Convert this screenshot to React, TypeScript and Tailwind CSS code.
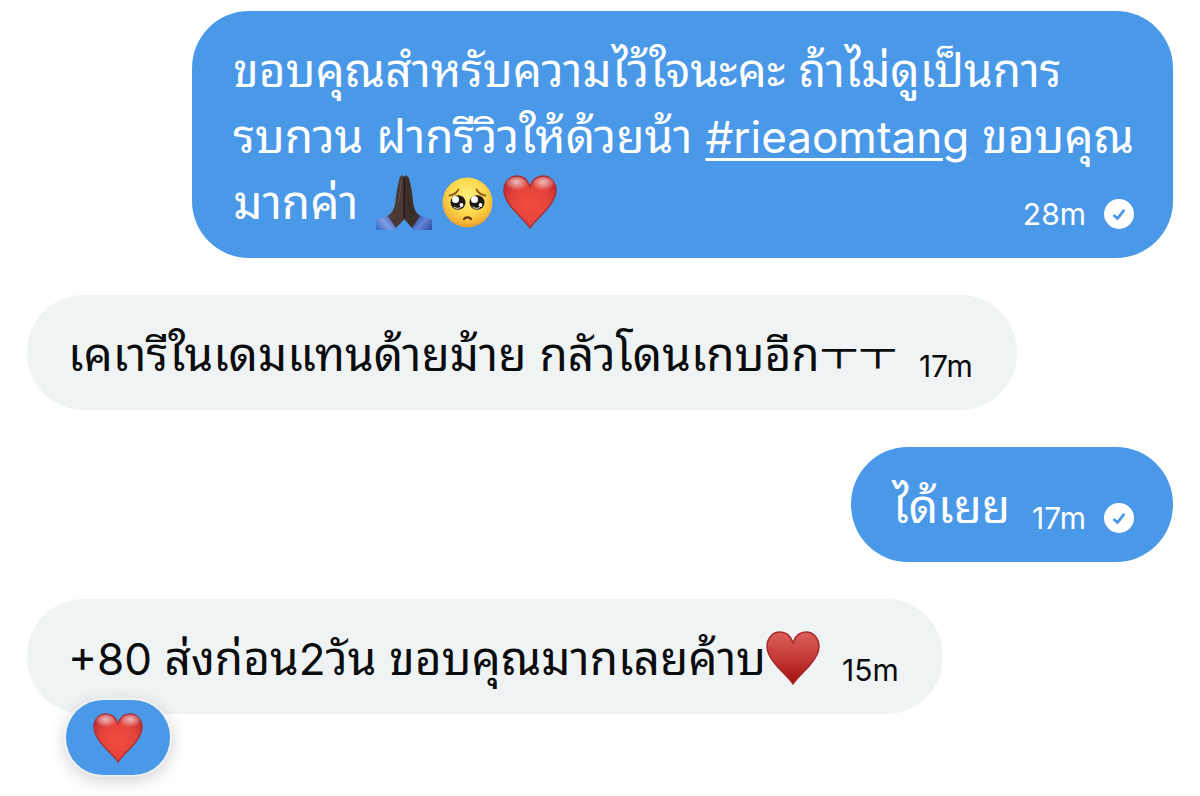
import type { ReactNode } from "react";

type Tone = "red" | "suit";

interface Message {
  id: number;
  sent: boolean;
  lines: ReactNode[];
  time: string;
  reaction?: boolean;
}

function Heart({ id, tone = "red", className }: { id: string; tone?: Tone; className: string }) {
  const suit = tone === "suit";
  return (
    <svg className={className} viewBox="0 0 54 54" fill="none" role="img" aria-label="heart">
      <defs>
        <radialGradient id={`${id}-fill`} cx="0.5" cy="0.55" r="0.6">
          <stop offset="0" stopColor="#ef4d40" />
          <stop offset="0.6" stopColor="#e6443b" />
          <stop offset="1" stopColor="#c22c2f" />
        </radialGradient>
        <linearGradient id={`${id}-suit`} x1="0" y1="0" x2="0" y2="1">
          <stop offset="0" stopColor="#dc5f5b" />
          <stop offset="0.5" stopColor="#c53a38" />
          <stop offset="1" stopColor="#a30f0c" />
        </linearGradient>
        <radialGradient id={`${id}-shine`} cx="0.5" cy="0.35" r="0.6">
          <stop offset="0" stopColor="#fff" stopOpacity="0.65" />
          <stop offset="0.5" stopColor="#fff" stopOpacity="0.35" />
          <stop offset="1" stopColor="#fff" stopOpacity="0" />
        </radialGradient>
      </defs>
      <path
        d="M27 53C24.5 48.5 16.500 41.500 10 34C4.300 27.300 1 22 1 15.500C1 7.200 6.600 1 14 1C20.200 1 24.600 4.700 27 11.500C29.400 4.700 33.800 1 40 1C47.400 1 53 7.200 53 15.500C53 22 49.700 27.300 44 34C37.500 41.500 29.500 48.500 27 53Z"
        fill={suit ? `url(#${id}-suit)` : `url(#${id}-fill)`}
        stroke={suit ? "#a52a2c" : "#a93237"}
        strokeWidth="1.500"
      />
      {!suit && (
        <>
          <ellipse cx="13.500" cy="9" rx="10.500" ry="7" fill={`url(#${id}-shine)`} />
          <ellipse cx="40.500" cy="9" rx="10.500" ry="7" fill={`url(#${id}-shine)`} />
        </>
      )}
    </svg>
  );
}

function PleadingFace() {
  return (
    <svg className="size-[51px]" viewBox="0 0 51 51" role="img" aria-label="pleading face">
      <defs>
        <radialGradient id="face" cx="0.5" cy="0.38" r="0.64">
          <stop offset="0" stopColor="#fff07c" />
          <stop offset="0.55" stopColor="#fcd84c" />
          <stop offset="0.85" stopColor="#f3b236" />
          <stop offset="1" stopColor="#dc9330" />
        </radialGradient>
      </defs>
      <circle cx="25.5" cy="25.5" r="25" fill="url(#face)" />
      <path d="M7.500 18.500C11.500 18 14.500 16 16.500 12.500M43.500 18.500C39.500 18 36.500 16 34.500 12.500" fill="none" stroke="#8a571b" strokeWidth="1.800" strokeLinecap="round" />
      <ellipse cx="16" cy="25.500" rx="7.500" ry="7.300" fill="#201815" />
      <ellipse cx="35" cy="25.500" rx="7.500" ry="7.300" fill="#201815" />
      <circle cx="13.500" cy="22.500" r="3.500" fill="#fff" />
      <circle cx="32.500" cy="22.500" r="3.500" fill="#fff" />
      <circle cx="19.500" cy="28" r="1.900" fill="#fff" />
      <circle cx="38.500" cy="28" r="1.900" fill="#fff" />
      <path d="M12 30C14 31.500 17 31.500 18.500 30.500M31 30C33 31.500 36 31.500 37.500 30.500" fill="none" stroke="#b9b4b0" strokeWidth="1.200" strokeLinecap="round" />
      <path d="M22 42C23.500 39.700 27.500 39.700 29 42" fill="none" stroke="#53310f" strokeWidth="2.200" strokeLinecap="round" />
    </svg>
  );
}

function FoldedHands() {
  return (
    <svg className="h-[55px] w-[56px]" viewBox="0 0 56 55" role="img" aria-label="folded hands">
      <defs>
        <linearGradient id="sleeve-l" x1="0" y1="0.8" x2="1" y2="0.2">
          <stop offset="0" stopColor="#3f6fcb" />
          <stop offset="0.45" stopColor="#7f9fe6" />
          <stop offset="1" stopColor="#2c479c" />
        </linearGradient>
        <linearGradient id="sleeve-r" x1="1" y1="0.8" x2="0" y2="0.2">
          <stop offset="0" stopColor="#3457ac" />
          <stop offset="0.45" stopColor="#6384d6" />
          <stop offset="1" stopColor="#2c479c" />
        </linearGradient>
      </defs>
      <path d="M0 44C5 43 9 42 13 40L21 52L18 55H0Z" fill="url(#sleeve-l)" />
      <path d="M56 44C51 43 47 42 43 40L35 52L38 55H56Z" fill="url(#sleeve-r)" />
      <path d="M25 1C27 0 28.500 1 28.500 3V44L20 53L12 41C17 37 19 32 19.500 26C20 18 22.500 9 23.500 3Z" fill="#4b3933" />
      <path d="M31 1C29.500 0 28 1 28 3V44L36 53L44 41C39 37 37.500 32 37 26C36.500 18 34.500 9 33 3Z" fill="#3f2f2b" />
      <path d="M28.200 3V43" fill="none" stroke="#201615" strokeWidth="1.300" />
      <path d="M32 22C33 31 34 36 38 41" fill="none" stroke="#2c201d" strokeWidth="1" />
      <path d="M25.500 4C25 12 23.500 20 22.500 28" fill="none" stroke="#66504a" strokeWidth="1" />
    </svg>
  );
}

function SentCheck() {
  return (
    <svg className="size-[30px]" viewBox="0 0 30 30" fill="none" role="img" aria-label="Sent">
      <circle cx="15" cy="15" r="15" fill="white" />
      <path d="M9.500 16L13.500 19.500L20.300 10.800" stroke="#4a99e9" strokeWidth="2.800" />
    </svg>
  );
}

// Latin letters and digits run larger than the Thai ones at the same size
function Latin({ children }: { children: ReactNode }) {
  return <span className="text-[44px] leading-none">{children}</span>;
}

const MESSAGES: Message[] = [
  {
    id: 1,
    sent: true,
    time: "28m",
    lines: [
      "ขอบคุณสำหรับความไว้ใจนะคะ ถ้าไม่ดูเป็นการ",
      <>
        รบกวน ฝากรีวิวให้ด้วยน้า{" "}
        <a href="#rieaomtang" className="underline decoration-3 underline-offset-5">
          <Latin>#rieaomtang</Latin>
        </a>{" "}
        ขอบคุณ
      </>,
      <span className="flex items-center gap-[18px]">
        มากค่า
        <span className="flex items-center gap-2.5">
          <FoldedHands />
          <PleadingFace />
          <Heart id="heart-thanks" className="size-[54px]" />
        </span>
      </span>,
    ],
  },
  {
    id: 2,
    sent: false,
    time: "17m",
    lines: [
      <>
        เคเารีในเดมแทนด้ายม้าย กลัวโดนเกบอีก<span className="text-[42px] leading-none">ㅜㅜ</span>
      </>,
    ],
  },
  { id: 3, sent: true, time: "17m", lines: ["ได้เยย"] },
  {
    id: 4,
    sent: false,
    time: "15m",
    reaction: true,
    lines: [
      <span className="flex items-center">
        <span>
          <Latin>+80 </Latin>ส่งก่อน<Latin>2</Latin>วัน ขอบคุณมากเลยค้าบ
        </span>
        <Heart id="heart-suit" tone="suit" className="size-[54px]" />
      </span>,
    ],
  },
];

function Bubble({ message }: { message: Message }) {
  const { sent, lines, time, reaction } = message;
  const last = lines.length - 1;
  return (
    <li
      className={`relative max-w-[88%] rounded-[57px] pt-[26px] pb-[23px] pl-[41px] ${
        sent ? "self-end bg-[#4a99e9] pr-[39px] text-white" : "self-start bg-[#eff3f4] pr-[44px] text-[#0b0c0d]"
      }`}
    >
      {lines.slice(0, last).map((line, i) => (
        <p key={i} className="whitespace-nowrap">{line}</p>
      ))}
      <div className="flex items-end justify-between gap-[22px]">
        <p className="whitespace-nowrap">{lines[last]}</p>
        <div className="flex items-center gap-[18px] text-[30px] leading-[42px]">
          <time>{time}</time>
          {sent && <SentCheck />}
        </div>
      </div>
      {reaction && (
        <button
          type="button"
          aria-label="Remove heart reaction"
          className="absolute -bottom-[61px] left-[39px] flex h-[75px] w-[104px] items-center justify-center rounded-[37px] bg-[#4a99e9] shadow-[0_0_0_2px_rgba(255,255,255,0.5),0_4px_18px_rgba(0,0,0,0.22)]"
        >
          <Heart id="heart-reaction" className="size-[50px]" />
        </button>
      )}
    </li>
  );
}

export default function App() {
  return (
    <main className="min-h-screen bg-white px-[27px] pt-[11px] pb-20 font-[Inter,'Noto_Sans_Thai_Looped','Noto_Sans_Thai','Noto_Sans_CJK_KR',sans-serif] text-[46px] leading-[66px]">
      <ul className="flex flex-col gap-[37px]">
        {MESSAGES.map(message => (
          <Bubble key={message.id} message={message} />
        ))}
      </ul>
    </main>
  );
}
